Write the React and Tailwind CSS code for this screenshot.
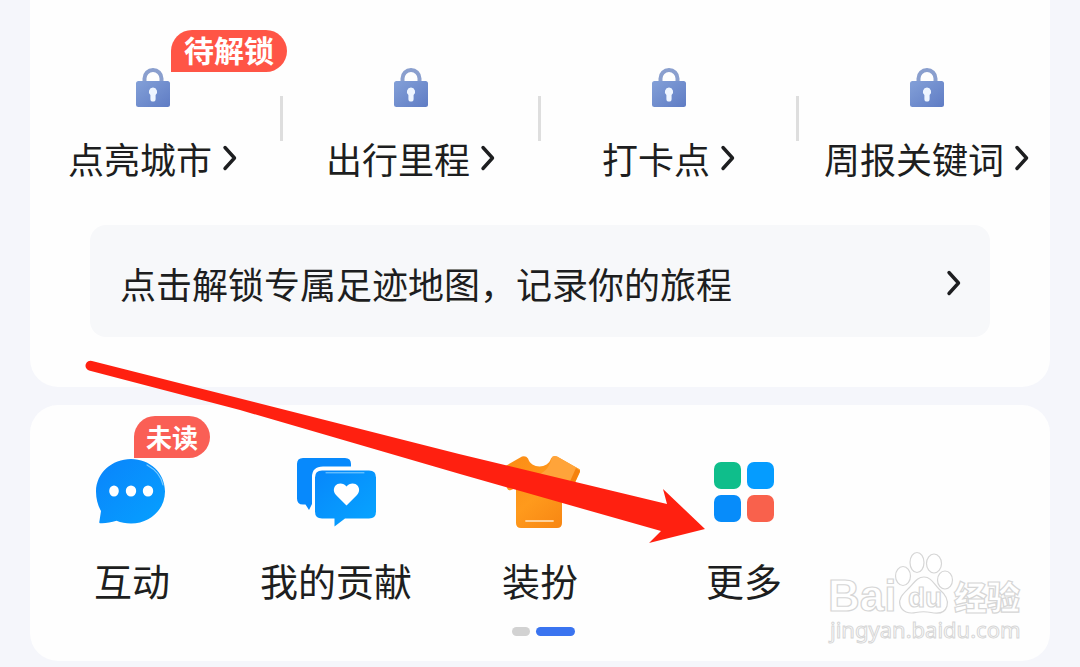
const STATS = [
  { label: '点亮城市', badge: '待解锁' },
  { label: '出行里程' },
  { label: '打卡点' },
  { label: '周报关键词' },
];

const SHORTCUTS = [
  { label: '互动', icon: ChatIcon, badge: '未读' },
  { label: '我的贡献', icon: ContributionIcon },
  { label: '装扮', icon: ShirtIcon },
  { label: '更多', icon: MoreIcon },
];

function LockIcon() {
  return (
    <svg width="36" height="40" viewBox="0 0 36 40" fill="none" aria-hidden="true">
      <defs>
        <linearGradient id="lock-body" x1="0" y1="0" x2="1" y2="1">
          <stop offset="0" stopColor="#83a0d8" />
          <stop offset="1" stopColor="#5f7cc4" />
        </linearGradient>
      </defs>
      <path d="M9.500 15V10.500a8.500 8.500 0 0 1 17 0V15" stroke="#8a9fce" strokeWidth="4" />
      <rect x="1" y="13" width="34" height="26" rx="2.500" fill="url(#lock-body)" />
      <path d="M18 19.500a4.300 4.300 0 0 0-2.600 7.600V31a2.600 2.600 0 0 0 5.200 0v-3.900A4.300 4.300 0 0 0 18 19.500Z" fill="#eef5ff" />
    </svg>
  );
}

function Chevron() {
  return (
    <svg width="16" height="26" viewBox="0 0 16 26" fill="none" aria-hidden="true" className="shrink-0">
      <path d="M3 2.500 12.500 13 3 23.500" stroke="#1d1e20" strokeWidth="3.400" strokeLinecap="round" strokeLinejoin="round" />
    </svg>
  );
}

function ChatIcon() {
  return (
    <svg width="80" height="72" viewBox="0 0 80 72" aria-hidden="true">
      <defs>
        <linearGradient id="chat-fill" x1="0" y1="0" x2="1" y2="1">
          <stop offset="0" stopColor="#0a84fb" />
          <stop offset="1" stopColor="#06a0ff" />
        </linearGradient>
      </defs>
      <path d="M39 3C58 3 73 17 73 35.500C73 53.500 58 67.500 39 67.500C33.500 67.500 29 66.500 24.500 64.800C19 66.500 13 67.500 8.500 67.200C7.500 67.200 7 66.500 7.400 65.500L9 55C6 50 4 43 4 35.500C4 17 20 3 39 3Z" fill="url(#chat-fill)" />
      <path d="M55 9C64 14 69.500 21 71 29" fill="none" stroke="#7ccbff" strokeWidth="1.200" strokeLinecap="round" />
      <ellipse cx="22" cy="35" rx="4.800" ry="5.500" fill="#fff" />
      <ellipse cx="39" cy="35" rx="5.200" ry="5.500" fill="#fff" />
      <ellipse cx="56" cy="35" rx="5.200" ry="5.500" fill="#fff" />
    </svg>
  );
}

function ContributionIcon() {
  return (
    <svg width="80" height="72" viewBox="0 0 80 72" aria-hidden="true">
      <defs>
        <linearGradient id="note-fill" x1="0" y1="0" x2="1" y2="1">
          <stop offset="0" stopColor="#0787fb" />
          <stop offset="1" stopColor="#07a5ff" />
        </linearGradient>
      </defs>
      <path d="M7 2H49Q55 2 55 8V10.500H27Q16 10.500 16 21V48L13 54L9.500 48.500H7Q1 48.500 1 42.500V8Q1 2 7 2Z" fill="#0789fc" />
      <path d="M26 14.500H73Q80 14.500 80 21.500V55.500Q80 62.500 73 62.500H49L38.500 70.500V62.500H26Q19 62.500 19 55.500V21.500Q19 14.500 26 14.500Z" fill="url(#note-fill)" />
      <path d="M30 16.800H68" stroke="#86d0ff" strokeWidth="1" strokeLinecap="round" />
      <path d="M50.500 49.500L40 39C36.500 35.500 37.500 30 41.500 28C45 26.500 48.500 28 50.500 30.500C52.500 28 56 26.500 59.500 28C63.500 30 64.500 35.500 61 39Z" fill="#fff" />
    </svg>
  );
}

function ShirtIcon() {
  return (
    <svg width="80" height="72" viewBox="0 0 80 72" aria-hidden="true">
      <defs>
        <linearGradient id="shirt-fill" x1="0" y1="0" x2="1" y2="1">
          <stop offset="0" stopColor="#fb8a14" />
          <stop offset="0.500" stopColor="#ff9a1c" />
          <stop offset="1" stopColor="#f58010" />
        </linearGradient>
      </defs>
      <path d="M22 0.500Q26 -0.500 28 2.500C31 13 48 13 51 2.500Q53 -0.500 57 0.500L79 13Q81 14 80 16L73 31Q72 34 69 33L62 30V67Q62 72 57 72H21Q16 72 16 67V32L11 34Q8 35 7 32L1 18Q-1 14 2 12Z" fill="url(#shirt-fill)" />
      <path d="M52 1Q54 -0.500 57 0.500L79 13L71 29L62 25L40 18C46 15 50 10 52 1Z" fill="#ffa43a" />
      <path d="M76 12L80 15L72 33L67 32Z" fill="#f5820c" />
      <path d="M26 65H53" stroke="#ffd29a" strokeWidth="1.800" strokeLinecap="round" />
    </svg>
  );
}

function MoreIcon() {
  return (
    <svg width="80" height="72" viewBox="0 0 80 72" aria-hidden="true">
      <rect x="10" y="6" width="27" height="27" rx="7" fill="#0fbe8b" />
      <rect x="43" y="6" width="27" height="27" rx="7" fill="#059cff" />
      <rect x="10" y="39" width="27" height="27" rx="7" fill="#078cfa" />
      <rect x="43" y="39" width="27" height="27" rx="7" fill="#f9614c" />
    </svg>
  );
}

function PointerArrow() {
  return (
    <svg width="624" height="188" viewBox="0 0 624 188" aria-hidden="true" className="pointer-events-none absolute left-[84px] top-[358px]">
      <path d="M8 3L375 96L583 146L579 131L621 171L565 185L577 173L376 116L156 52L5 12.500A4.900 4.900 0 0 1 8 3Z" fill="#ff2010" />
    </svg>
  );
}

function Watermark() {
  return (
    <svg
      width="200"
      height="96"
      viewBox="0 0 200 96"
      role="img"
      aria-label="Baidu 经验"
      className="pointer-events-none absolute bottom-3.5 right-7"
      fill="#fff"
      stroke="#d6d6d6"
      strokeWidth="1.200"
    >
      <text x="6" y="60" fontSize="44" fontWeight="700" fontFamily="'Liberation Sans', sans-serif">Bai</text>
      <ellipse cx="81" cy="25" rx="7.500" ry="9.500" />
      <ellipse cx="95" cy="11.500" rx="7" ry="10" />
      <ellipse cx="112" cy="12.500" rx="7.500" ry="9.500" />
      <ellipse cx="123" cy="29" rx="7.500" ry="9" />
      <path d="M102 26C109 26 112 33 117 38C123 43 127 48 125 55C123 62 116 63 109 61.500C104 60.500 99 60.500 94 61.500C87 63 80 61 78 54C76 47 82 42 87 37C92 32 95 26 102 26Z" />
      <text x="86" y="56" fontSize="28" fontWeight="700" fontFamily="'Liberation Sans', sans-serif">du</text>
      <text x="132" y="59" fontSize="33" fontWeight="900" fontFamily="'Noto Sans CJK SC', sans-serif">经验</text>
      <text x="8" y="87" fontSize="22" strokeWidth="1" fontFamily="'Noto Sans', sans-serif">jingyan.baidu.com</text>
    </svg>
  );
}

export default function App() {
  return (
    <div className="relative min-h-screen bg-[#f5f6fb] px-[30px] pb-1.5 font-['Noto_Sans_CJK_SC',sans-serif] text-[#1d1e20]">
      <main className="flex flex-col gap-[18px]">
        <section className="rounded-b-[28px] bg-[#fefefe] pb-[50px] pt-[68px]">
          <div className="-mx-1.5 grid grid-cols-4">
            {STATS.map(({ label, badge }, i) => (
              <div key={label} className="relative">
                <button type="button" className="flex w-full flex-col items-center gap-[26px] whitespace-nowrap">
                  <span className="relative">
                    <LockIcon />
                    {badge && (
                      <span className="absolute -top-[38px] left-9 rounded-full rounded-bl-none bg-[#ff5546] px-[13px] pb-1 text-[30px] font-bold leading-[38px] text-white">
                        {badge}
                      </span>
                    )}
                  </span>
                  <span className="flex items-center gap-2.5 text-[36px] leading-[48px]">
                    {label}
                    <Chevron />
                  </span>
                </button>
                {i < STATS.length - 1 && <span className="absolute -right-px top-7 h-[45px] w-[3px] bg-[#dedede]" />}
              </div>
            ))}
          </div>

          <button type="button" className="mx-auto mt-[43px] flex h-28 w-[calc(100%-120px)] items-center justify-between rounded-2xl bg-[#f7f8fa] pl-[30px] pr-7 pt-1 text-left text-[36px] leading-[48px]">
            点击解锁专属足迹地图，记录你的旅程
            <Chevron />
          </button>
        </section>

        <section className="relative rounded-[28px] bg-[#fefefe] pb-[25px] pt-[51px]">
          <div className="grid grid-cols-5">
            {SHORTCUTS.map(({ label, icon: Icon, badge }) => (
              <button key={label} type="button" className="flex flex-col items-center gap-6 whitespace-nowrap">
                <span className="relative">
                  <Icon />
                  {badge && (
                    <span className="absolute -top-10 left-[42px] rounded-full rounded-bl-none bg-[#fa5f55] px-3 text-[26px] font-bold leading-[42px] text-white">
                      {badge}
                    </span>
                  )}
                </span>
                <span className="text-[38px] leading-[56px]">{label}</span>
              </button>
            ))}
          </div>

          <div className="mt-[19px] flex justify-center gap-1.5 pl-1.5">
            <span className="h-[9px] w-[18px] rounded-full bg-[#d2d2d2]" />
            <span className="h-[9px] w-[39px] rounded-full bg-[#3a74f0]" />
          </div>

          <Watermark />
        </section>
      </main>

      <PointerArrow />
    </div>
  );
}
